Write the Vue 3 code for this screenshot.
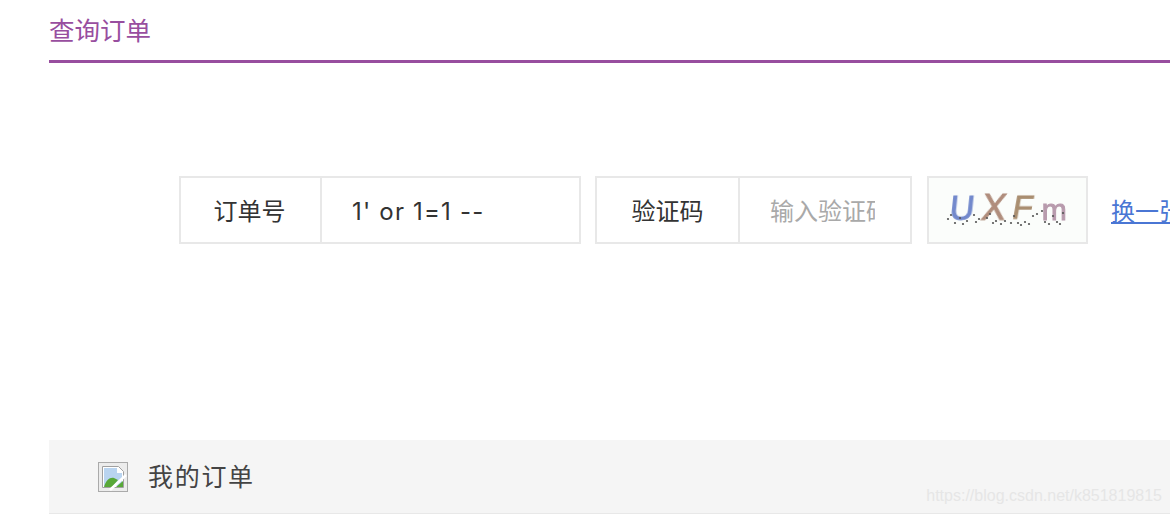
<script setup>
import { ref } from 'vue'

const orderNo = ref("1' or 1=1 --")
const code = ref('')

// noise dots under the captcha letters
const dots = [
  [19, 41], [22, 37], [26, 45], [31, 40], [34, 46], [38, 43], [45, 37], [47, 44], [50, 41],
  [58, 40], [61, 36], [64, 45], [67, 43], [72, 46], [76, 43], [82, 45], [85, 38], [89, 45],
  [92, 47], [96, 44], [100, 46], [104, 38], [108, 36], [113, 33], [116, 44], [120, 46],
  [124, 38], [128, 44], [131, 46], [134, 35]
]
</script>

<template>
  <div class="page">
    <h2 class="title">查询订单</h2>

    <form class="query" @submit.prevent>
      <div class="group group-order">
        <label class="group-label label-order">订单号</label>
        <input v-model="orderNo" class="group-input input-order" type="text" />
      </div>
      <div class="group group-code">
        <label class="group-label label-code">验证码</label>
        <input v-model="code" class="group-input input-code" type="text" placeholder="输入验证码" />
      </div>
      <div class="captcha">
        <span class="ch ch-u">U</span>
        <span class="ch ch-x">X</span>
        <span class="ch ch-f">F</span>
        <span class="ch ch-m">m</span>
        <svg class="noise" width="157" height="64" viewBox="0 0 157 64">
          <circle v-for="(d, i) in dots" :key="i" :cx="d[0]" :cy="d[1]" r="1.1" fill="#555" />
        </svg>
      </div>
      <a class="refresh" href="#">换一张</a>
    </form>

    <div class="orders-bar">
      <svg class="broken" width="30" height="30" viewBox="0 0 30 30">
        <rect x="0.5" y="0.5" width="29" height="29" fill="#ececec" stroke="#aaa" />
        <path d="M4.5 4.5h16l5 5v16h-21z" fill="#fff" stroke="#a0a0a0" />
        <path d="M6 6h13v5h5v13H6z" fill="#b9d4f0" />
        <path d="M6 25c2-7 6-10 10-9l4 2-6 7z" fill="#58a838" />
        <path d="M12 28L28 13" stroke="#fff" stroke-width="2.5" />
        <path d="M18 25l7-6v6z" fill="#58a838" />
      </svg>
      <span class="orders-text">我的订单</span>
    </div>

    <span class="watermark">https://blog.csdn.net/k851819815</span>
  </div>
</template>

<style>
html, body {
  overflow: hidden;
  background: #fff;
}
</style>

<style scoped>
.page {
  position: relative;
  width: 1170px;
  height: 514px;
  padding-left: 49px;
  box-sizing: border-box;
  overflow: hidden;
  font-family: "Inter", "Noto Sans CJK SC", sans-serif;
}

.title {
  margin: 0;
  height: 60px;
  line-height: 62px;
  font-size: 25.5px;
  font-weight: 400;
  color: #984e9f;
  border-bottom: 3px solid #984e9f;
}

.query {
  display: flex;
  align-items: center;
  margin: 113px 0 0 130px;
  height: 68px;
  white-space: nowrap;
}

.group {
  display: flex;
  height: 68px;
  box-sizing: border-box;
  flex: none;
  border: 2px solid #e8e8e8;
}

.group-order {
  width: 402px;
}

.group-code {
  width: 317px;
  margin-left: 14px;
}

.group-label {
  flex: none;
  text-align: center;
  line-height: 68px;
  font-size: 24px;
  color: #333;
  border-right: 2px solid #e8e8e8;
  box-sizing: border-box;
}

.label-order {
  width: 141px;
  padding-right: 2px;
}

.label-code {
  width: 143px;
}

.group-input {
  flex: 1;
  min-width: 0;
  border: none;
  outline: none;
  padding: 2px 20px 0 30px;
  font: inherit;
  font-size: 24px;
  color: #333;
  background: transparent;
}

.input-order {
  letter-spacing: 1.2px;
}

.input-code {
  padding-right: 35px;
}

.input-code::placeholder {
  color: #a9a9a9;
  opacity: 1;
}

.captcha {
  position: relative;
  flex: none;
  display: flex;
  align-items: center;
  width: 161px;
  height: 68px;
  margin-left: 15px;
  padding: 0 0 5px 21px;
  box-sizing: border-box;
  border: 2px solid #e8e8e8;
  background: #fbfdfb;
  font-family: "Liberation Sans", sans-serif;
  font-size: 36px;
  line-height: 1;
}

.ch {
  display: block;
  filter: blur(0.5px);
  -webkit-text-stroke: 1px currentColor;
}

.ch-u {
  color: #7389cc;
  font-size: 34px;
  transform: skewX(-6deg);
}

.ch-x {
  margin-left: 7px;
  color: #b08d7c;
  font-size: 36px;
  transform: skewX(-8deg);
}

.ch-f {
  margin-left: 7px;
  color: #a98e70;
  font-size: 33px;
  transform: skewX(-10deg);
}

.ch-m {
  margin-left: 9px;
  color: #b89bad;
  font-size: 30px;
  margin-top: 4px;
}

.noise {
  position: absolute;
  left: 0;
  top: 0;
}

.refresh {
  flex: none;
  margin-left: 23px;
  margin-top: -2px;
  font-size: 24px;
  color: #4a76d4;
  text-decoration: underline;
}

.orders-bar {
  display: flex;
  align-items: center;
  height: 75px;
  margin-top: 196px;
  padding-left: 49px;
  box-sizing: border-box;
  background: #f5f5f5;
  border-bottom: 2px solid #e8e8e8;
}

.broken {
  flex: none;
  margin-top: 1px;
}

.orders-text {
  margin-left: 20px;
  margin-bottom: 4px;
  font-size: 25px;
  letter-spacing: 1.7px;
  color: #444;
}

.watermark {
  position: absolute;
  right: 8px;
  top: 487px;
  font-family: "Liberation Sans", sans-serif;
  font-size: 16px;
  color: #e6e6e6;
}
</style>
